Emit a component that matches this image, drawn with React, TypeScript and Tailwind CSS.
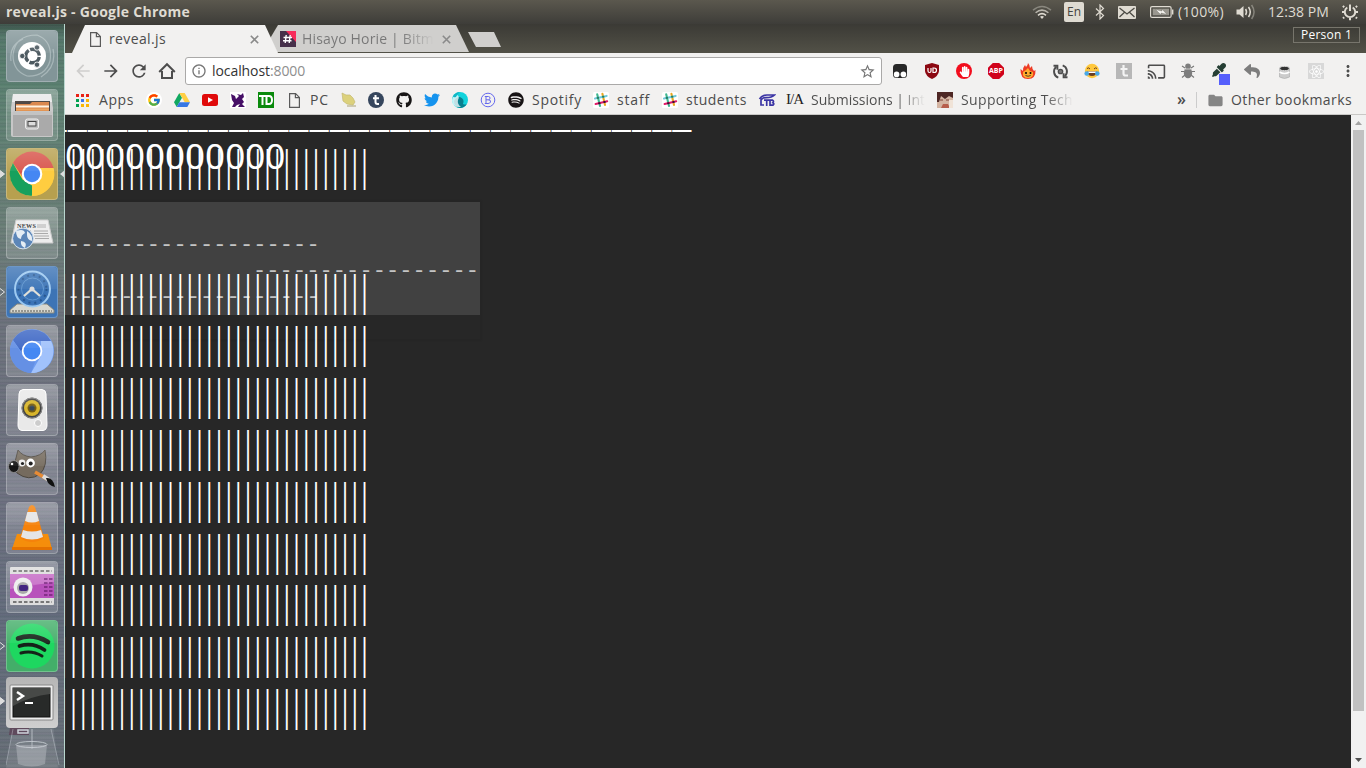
import { useLayoutEffect, useRef, type ReactNode } from "react";
import { FaSpotify, FaGithub, FaTwitter, FaReact, FaReply, FaEyeDropper, FaHandPaper } from "react-icons/fa";
import { FcGoogle } from "react-icons/fc";
import { MdCast, MdRefresh, MdArrowBack, MdArrowForward, MdInfoOutline, MdStarBorder, MdMoreVert, MdFolder } from "react-icons/md";

/** Text spread over a fixed width by letter spacing. */
function Fit({ w, text, className = "" }: { w: number; text: string; className?: string }) {
  const ref = useRef<HTMLSpanElement>(null);
  useLayoutEffect(() => {
    const el = ref.current;
    if (!el) return;
    let spacing = 0.01;
    for (let pass = 0; pass < 4; pass++) {
      el.style.letterSpacing = `${spacing}px`;
      spacing += (w - el.getBoundingClientRect().width) / text.length;
    }
    el.style.letterSpacing = `${spacing}px`;
  }, [w, text]);
  return <span ref={ref} className={`inline-block shrink-0 whitespace-pre pb-[2px] ${className}`}>{text}</span>;
}

function PageIcon() {
  return (
    <svg width="11" height="15" viewBox="0 0 11 15" fill="none" stroke="#5a5a5a" strokeWidth="1.2">
      <path d="M.6 .6H6.6L10.4 4.4V14.4H.6Z" /><path d="M6.4 .8V4.6H10.2" />
    </svg>
  );
}

function Close() {
  return <svg width="9" height="9" viewBox="0 0 9 9" stroke="#8a8a8a" strokeWidth="1.6"><path d="M.8 .8L8.2 8.2M8.2 .8L.8 8.2" /></svg>;
}

function Slack() {
  return (
    <svg width="16" height="16" viewBox="0 0 16 16" strokeWidth="2.1" strokeLinecap="round">
      <rect width="16" height="16" rx="1.5" fill="#fff" />
      <path d="M4.2 2.2L7 14" stroke="#3eb890" /><path d="M9.4 1.8L12 13" stroke="#e9a820" />
      <path d="M2 6.6L13.6 3.9" stroke="#70cadb" /><path d="M2.6 12L14.2 9.3" stroke="#e01765" />
      <path d="M4.7 5.9l.4 0M10 4.8l.4 0" stroke="#258060" /><path d="M6.1 11.2l.4 0M11.3 10l.4 0" stroke="#361238" />
    </svg>
  );
}

function TopBar() {
  return (
    <header className="flex h-6 shrink-0 items-center bg-linear-to-b from-[#5b584e] to-[#3e3d39] pl-[6px] text-[#dfdbd2]">
      <Fit w={184} text="reveal.js - Google Chrome" className="text-[14px] font-bold" />
      <svg className="ml-[842px] shrink-0" width="20" height="16" viewBox="0 0 20 16" fill="none" stroke="#dfdbd2" strokeWidth="1.5">
        <path d="M1 6.2Q10 -1 19 6.2" opacity=".4" /><path d="M3.6 8.8Q10 3.4 16.4 8.8" opacity=".75" /><path d="M6 11.3Q10 8 14 11.3" /><path d="M8 12.8Q10 11.2 12 12.8L10 15Z" fill="#dfdbd2" stroke="none" />
      </svg>
      <div className="ml-[12px] flex h-5 w-5 shrink-0 items-center justify-center rounded-[2px] bg-[#dfdbd2] text-[#45443f]"><Fit w={14} text="En" className="pb-0! text-[12px]" /></div>
      <svg className="ml-[11px] shrink-0" width="10" height="16" viewBox="0 0 10 16" fill="none" stroke="#dfdbd2" strokeWidth="1.2"><path d="M1 4.5L8.5 11.5L5 15V1L8.5 4.5L1 11.5" /></svg>
      <svg className="ml-[13px] shrink-0" width="18" height="13" viewBox="0 0 18 13"><rect width="18" height="13" rx="1" fill="#dfdbd2" /><path d="M1.5 2L9 8L16.5 2M1.5 11L6.3 6.6M16.5 11L11.7 6.6" fill="none" stroke="#4a4943" strokeWidth="1.3" /></svg>
      <svg className="ml-[14px] shrink-0" width="24" height="12" viewBox="0 0 24 12" fill="none" stroke="#dfdbd2"><rect x=".6" y=".6" width="20.5" height="10.8" rx="1.5" strokeWidth="1.2" /><rect x="2.7" y="2.7" width="16.3" height="6.6" fill="#9a978f" stroke="none" /><path d="M22.7 3.5V8.5" strokeWidth="1.4" /><path d="M5.5 3.5L12 5V3L17 8.5L11 7V9Z" fill="#f4f2ee" stroke="#66645c" strokeWidth=".4" /></svg>
      <Fit w={46} text="(100%)" className="ml-[4px] text-[14px]" />
      <svg className="ml-[12px] shrink-0" width="20" height="16" viewBox="0 0 20 16" fill="none" stroke="#dfdbd2" strokeWidth="1.5"><path d="M.5 5.5H3.5L7.5 2V14L3.5 10.5H.5Z" fill="#dfdbd2" stroke="none" /><path d="M9.6 5Q11.4 8 9.6 11" /><path d="M12.5 3Q16 8 12.5 13" /><path d="M15.6 1Q20.5 8 15.6 15" opacity=".4" /></svg>
      <Fit w={61} text="12:38 PM" className="ml-[12px] text-[14px]" />
      <svg className="ml-[12px] shrink-0" width="18" height="18" viewBox="0 0 18 18" fill="none" stroke="#dfdbd2"><path d="M6.3 4.5A5.2 5.2 0 1 0 11.7 4.5" strokeWidth="1.9" /><path d="M9 1.5V8" strokeWidth="2" /><path d="M3.2 4.2L1.9 2.9M1 9H3.5M3.2 14.2L2 15.4M9 15V17.3M14.8 14.2L16 15.4M14.5 9H17M14.8 4.2L16.1 2.9" strokeWidth="2" /></svg>
    </header>
  );
}

function Tile({ tint, children }: { tint: string; children: ReactNode }) {
  return (
    <div className={`relative flex h-[52px] w-[52px] shrink-0 items-center justify-center rounded-[4px] border border-white/25 ${tint}`}>
      <svg width="50" height="50" viewBox="0 0 50 50">{children}</svg>
      <div className="pointer-events-none absolute inset-x-0 top-0 h-[22px] rounded-t-[4px] bg-linear-to-b from-white/20 to-white/5" />
    </div>
  );
}

function Arrow({ fill, top }: { fill: string; top: string }) {
  return <svg className={`absolute left-0 ${top}`} width="5" height="8" viewBox="0 0 5 8"><path d="M0 .5L4.5 4L0 7.5" fill={fill} stroke="#e5e5e5" /></svg>;
}

function Launcher() {
  const glass = "bg-white/15";
  return (
    <aside className="relative flex w-[65px] shrink-0 flex-col gap-[7px] overflow-hidden border-r border-[#b9d7cf] bg-[repeating-linear-gradient(180deg,rgba(255,255,255,.07)_0px,rgba(40,50,60,.12)_1px,rgba(160,120,190,.06)_3px,rgba(20,60,50,.1)_4px,rgba(255,255,255,.04)_7px),linear-gradient(180deg,#3c5549_0px,#55786a_12px,#5b8170_60px,#6b7f77_200px,#6d727c_300px,#6e7180_480px,#636c7c_600px,#676e76_744px)] pl-[6px] pt-[6px]">
      <Tile tint="bg-[#829598]">
        <path d="M6 24Q8 4 30 4Q46 10 43 30Q38 46 20 45Q6 40 6 24M4 30Q2 14 16 8M46 18Q50 36 34 46" fill="none" stroke="#b6c4c6" strokeWidth="1.2" opacity=".7" />
        <circle cx="25" cy="25" r="14" fill="#fff" /><circle cx="25.5" cy="25" r="6.8" fill="none" stroke="#4c5960" strokeWidth="3.4" strokeDasharray="12.7 1.5" strokeDashoffset="-1" />
        <g fill="#4c5960" stroke="#fff" strokeWidth=".8"><circle cx="15.3" cy="25" r="2.7" /><circle cx="30" cy="16.5" r="2.7" /><circle cx="30" cy="33.7" r="2.7" /></g>
      </Tile>
      <Tile tint={glass}>
        <path d="M6 4H44L46 18V45Q46 47 44 47H6Q4 47 4 45V18Z" fill="#c7c7c7" /><path d="M6 4H44L45 12H5Z" fill="#e9e9e9" />
        <rect x="8" y="11" width="35" height="10" fill="#3a332f" /><path d="M9 14H23L25 12H42V21H9Z" fill="#d77b39" /><path d="M9 16.5H42" stroke="#fff3df" strokeWidth="2" /><path d="M9 19.5H42" stroke="#e9a15a" strokeWidth="2" />
        <path d="M6 21H45V46H6Z" fill="#aaa" /><path d="M6 21H45V25H6Z" fill="#c3c3c3" /><rect x="18.5" y="29" width="13" height="10" rx="2" fill="#bebebe" stroke="#eee" /><rect x="21" y="31.5" width="8" height="4.5" fill="#ddd" stroke="#444" />
      </Tile>
      <Tile tint="bg-[#b7a04f]">
        <circle cx="25" cy="25" r="22" fill="#ffcd40" /><path d="M5.9 14A22 22 0 0 1 46.5 19H25L17 30Z" fill="#d8544b" /><path d="M5.9 14L15.5 30.5L25 36.5L25 47A22 22 0 0 1 5.9 14Z" fill="#17a05d" /><path d="M34 30L24.5 47A22 22 0 0 0 46.5 19H27Z" fill="#ffcd40" />
        <circle cx="25" cy="25" r="10.3" fill="#fff" /><circle cx="25" cy="25" r="8.2" fill="#4587f3" />
      </Tile>
      <Tile tint={glass}>
        <path d="M9 12H41L46 35H4Z" fill="#ededed" stroke="#c9c9c9" /><text x="10" y="20" fontSize="6.2" fontWeight="bold" fontFamily="Liberation Serif" textLength="19" fill="#333">NEWS</text>
        <path d="M30 16H39V20H30Z" fill="#ccc" /><path d="M11 23H24M10 25.5H24M27 23H41M27 25.5H41M27 28H42M28 30.5H42" stroke="#aaa" />
        <circle cx="16" cy="30.5" r="10.4" fill="#5c86b8" stroke="#d7e3ef" /><path d="M9 23Q17 20 18 25Q14 27 14 31Q9 30 9 23M20 23Q26 27 25 33Q20 32 20 27M14 33Q21 34 18 40Q13 38 14 33" fill="#e5edf4" />
      </Tile>
      <Tile tint="bg-[#3d74b5]">
        <path d="M10 37H40L47 43V46H3V43Z" fill="#d8d8d0" stroke="#85857b" /><path d="M5 44H45" stroke="#55554d" strokeDasharray="2 1" />
        <circle cx="25.5" cy="22" r="17.5" fill="#3a73b6" stroke="#9cc9f1" strokeWidth="2" /><circle cx="25.5" cy="22" r="14" fill="none" stroke="#28578f" strokeWidth="2" strokeDasharray="2 4" /><circle cx="25.5" cy="22" r="11" fill="none" stroke="#5f96cf" />
        <path d="M17 29L25 22L33 29" fill="none" stroke="#e0e0d8" strokeWidth="2.2" /><circle cx="25" cy="22" r="2.5" fill="#ddd" />
      </Tile>
      <Tile tint={glass}>
        <circle cx="25" cy="25" r="22" fill="#6e9cf0" /><path d="M5.9 14A22 22 0 0 1 44 15H25L16 28Z" fill="#3d67c5" /><path d="M44 15A22 22 0 0 1 24 47L34 30V15Z" fill="#a1c2fb" /><path d="M5.9 14L16 30L28 36L24 47A22 22 0 0 1 5.9 14Z" fill="#6590e4" />
        <circle cx="25" cy="25" r="10.3" fill="#fff" /><circle cx="25" cy="25" r="8.5" fill="#4588f3" />
      </Tile>
      <Tile tint={glass}>
        <path d="M12 9Q12 5 16 4.5H35Q39 5 39 9L40 40Q40 45 36 45.5H15Q11 45 11 40Z" fill="#e9e9e9" stroke="#fff" />
        <circle cx="25" cy="23" r="10.5" fill="#444" /><circle cx="25" cy="23" r="8" fill="#d8b52b" /><circle cx="25" cy="23" r="4.5" fill="#765c10" /><circle cx="25" cy="23" r="2.6" fill="#38485a" /><circle cx="25" cy="23" r="10" fill="none" stroke="#999" strokeWidth=".8" /><circle cx="31" cy="38" r="3.5" fill="#ccc" stroke="#fff" />
      </Tile>
      <Tile tint={glass}>
        <path d="M11 6Q15 12 24 13Q34 12 38 6Q41 22 33 30Q22 38 10 29L7 22Z" fill="#756b5e" stroke="#4c463e" />
        <circle cx="15" cy="19" r="3.4" fill="#eee" /><circle cx="23.5" cy="19" r="4.4" fill="#fff" /><circle cx="15.5" cy="19.5" r="1.6" fill="#111" /><circle cx="23.7" cy="19.5" r="2" fill="#111" />
        <ellipse cx="6.8" cy="22.5" rx="5.3" ry="6" fill="#161616" stroke="#888" /><circle cx="5" cy="20" r="1.3" fill="#fff" /><path d="M28 28L40 35" stroke="#e78b35" strokeWidth="3.5" /><path d="M36 32L42 36" stroke="#ddd" strokeWidth="4" /><path d="M39 34Q46 33 48 43Q41 42 39 34Z" fill="#111" />
      </Tile>
      <Tile tint={glass}>
        <path d="M10 31H41L45 46H5Z" fill="#f58e0b" /><path d="M5 44H45V47H5Z" fill="#e47200" /><path d="M22 4Q25 0 28 4L37 35Q25 43 13 35Z" fill="#f5820b" /><path d="M20.3 9H29.7L32 18Q25 21 18 18Z" fill="#e5e5e5" /><path d="M16 27Q25 30 34 27L36 34Q25 39 14 34Z" fill="#e5e5e5" />
      </Tile>
      <Tile tint={glass}>
        <rect x="3" y="5" width="44" height="38" rx="1" fill="#ddd" /><path d="M6 9H45M6 40H45" stroke="#777" strokeWidth="2" strokeDasharray="3.5 2" /><rect x="3" y="12" width="44" height="24" fill="#b851bb" /><path d="M3 12H47V20L3 27Z" fill="#c973c9" />
        <path d="M37 17H46M37 21H46M37 25H46M37 29H46M37 33H46" stroke="#74257a" strokeWidth="1.5" strokeDasharray="3.5 1.5" /><circle cx="16" cy="25" r="9.5" fill="#eee" /><circle cx="16" cy="26" r="6" fill="#aaa" /><rect x="12" y="23" width="9" height="6" rx="2" fill="#432680" />
      </Tile>
      <Tile tint="bg-[#43ae69]">
        <circle cx="25" cy="25" r="22.5" fill="#1ed760" /><path d="M11 17.5Q26 12 41 21" fill="none" stroke="#152219" strokeWidth="4.6" strokeLinecap="round" /><path d="M12.5 25Q26 21 37.5 29" fill="none" stroke="#152219" strokeWidth="3.8" strokeLinecap="round" /><path d="M14 32Q25 29 35 35" fill="none" stroke="#152219" strokeWidth="3.1" strokeLinecap="round" />
      </Tile>
      <div className="relative z-10 mt-[-2px] flex h-[51px] w-[52px] shrink-0 items-center justify-center rounded-[4px] bg-linear-to-b from-[#b6b6b6] to-[#cfcfcf]">
        <svg width="46" height="38" viewBox="0 0 46 38"><rect x="1" y="1" width="43" height="35" rx="1" fill="#eee" stroke="#888" /><rect x="4" y="4" width="37" height="29" fill="#282a29" stroke="#111" /><path d="M4 4H41V10Q22 12 4 22Z" fill="#474947" /><path d="M8 8L14 12L8 16" fill="none" stroke="#fff" strokeWidth="2.4" /><path d="M16 19H24" stroke="#fff" strokeWidth="2" /></svg>
      </div>
      <svg className="mt-[-10px] shrink-0" width="54" height="44" viewBox="0 0 54 44" fill="none" stroke="#d0d5db">
        <path d="M7 3L0 43H52L47 3Z" fill="#fff" opacity=".1" /><path d="M4 3H23V10H3Z" fill="#5f4a5c" stroke="none" /><path d="M12 5H22V8H12Z" strokeWidth="1.5" /><path d="M26 4V24" opacity=".7" /><path d="M10 20L12 39Q26 44 39 39L41 20Z" fill="#b5b9c0" stroke="none" opacity=".5" /><ellipse cx="25.5" cy="19.5" rx="15.5" ry="3" opacity=".8" /><path d="M7 4L0 40M45 4L53 40" opacity=".4" />
      </svg>
      <Arrow top="top-[146px]" fill="#ddd" /><Arrow top="top-[264px]" fill="none" /><Arrow top="top-[618px]" fill="none" /><Arrow top="top-[673px]" fill="#ddd" />
      <svg className="absolute left-[60px] top-[146px]" width="5" height="8" viewBox="0 0 5 8"><path d="M5 0V8L0 4Z" fill="#ddd" /></svg>
    </aside>
  );
}

function Tabs() {
  return (
    <div className="relative flex h-[29px] shrink-0 items-start bg-linear-to-b from-[#3b3a35] to-[#525147] text-[14px] text-[#4c4c4c]">
      <div className="z-10 mt-[1px] h-7 w-[213px] shrink-0 bg-[#f2f1f0] pl-[25px] [clip-path:polygon(7px_100%,20px_0,200px_0,100%_100%)]">
        <div className="flex h-7 items-center"><PageIcon /><Fit w={57} text="reveal.js" className="ml-[8px]" /><div className="ml-[84px]"><Close /></div></div>
      </div>
      <div className="ml-[-9px] mt-[1px] h-[27px] w-[200px] shrink-0 bg-[#d0cfcd] pl-[11px] [clip-path:polygon(8px_100%,1px_50%,9px_0,187px_0,100%_100%)]">
        <div className="flex h-7 items-center">
          <svg className="shrink-0" width="16" height="16" viewBox="0 0 16 16"><path d="M0 0H16V16H0Z" fill="#46304a" /><path d="M6 0H16V11Z" fill="#f72c5b" /><path d="M6.2 4L5.2 12M10.2 4L9.2 12M3.5 6.5H12M3 9.7H11.5" stroke="#fff" strokeWidth="1.4" /></svg>
          <Fit w={132} text="Hisayo Horie | Bitm" className="ml-[6px] bg-linear-to-r from-[#777] from-75% to-[#d0cfcd] bg-clip-text text-transparent" />
          <div className="ml-[8px]"><Close /></div>
        </div>
      </div>
      <div className="ml-[-1px] mt-[8px] h-[15px] w-[33px] bg-[#d0cfcd] [clip-path:polygon(0_0,26px_0,100%_100%,8px_100%)]" />
      <div className="absolute right-[6px] top-[3px] flex h-4 w-[67px] items-center justify-center border border-[#77756c] text-white"><Fit w={51} text="Person 1" className="pb-0! text-[12px] leading-4" /></div>
    </div>
  );
}

function Slot({ children }: { children: ReactNode }) {
  return <div className="flex w-8 shrink-0 items-center justify-center">{children}</div>;
}

function Toolbar() {
  return (
    <div className="flex h-[33px] shrink-0 items-center bg-[#f2f1f0] pl-[8px] pt-[3px] text-[#4d4d4d]">
      <MdArrowBack className="mr-[8px] shrink-0 text-[#cfcecd]" size={20} /><MdArrowForward className="mr-[8px] shrink-0" size={20} /><MdRefresh className="mr-[9px] shrink-0" size={20} />
      <svg className="shrink-0" width="18" height="18" viewBox="0 0 18 18" fill="none" stroke="#4d4d4d" strokeWidth="2"><path d="M1.2 10L9 2.2L16.8 10M4 9V16H14V9" /></svg>
      <div className="ml-[9px] flex h-7 w-[697px] shrink-0 items-center rounded-[3px] border border-[#aaa9a8] bg-white pl-[5px] text-[14px]">
        <MdInfoOutline size={16} color="#777" /><Fit w={58} text="localhost" className="ml-[5px] text-[#333]" /><Fit w={35} text=":8000" className="text-[#8e8e8e]" />
        <MdStarBorder className="ml-auto mr-[5px]" size={17} color="#757575" />
      </div>
      <div className="ml-[2px] flex items-center">
        <Slot><svg width="16" height="16" viewBox="0 0 16 16"><rect x="1" y="1" width="14" height="14" rx="3.5" fill="#282828" /><circle cx="4.6" cy="11.4" r="2.8" fill="#fff" /><circle cx="11.4" cy="11.4" r="2.8" fill="#fff" /></svg></Slot>
        <Slot><svg width="16" height="16" viewBox="0 0 16 16"><path d="M8 0L15 2V8Q14.5 13 8 16Q1.5 13 1 8V2Z" fill="#8c0812" /><path d="M4 5V8Q4 9.5 5.5 9.5Q7 9.5 7 8V5M9 5V9.5H10Q12.5 9.5 12.5 7.2Q12.5 5 10 5Z" fill="none" stroke="#fff" strokeWidth="1.2" /></svg></Slot>
        <Slot><div className="flex h-4 w-4 items-center justify-center rounded-full bg-[#f20d1d]"><FaHandPaper size={11} color="white" /></div></Slot>
        <Slot><div className="flex h-4 w-4 items-center justify-center bg-[#d0021b] text-white [clip-path:polygon(30%_0,70%_0,100%_30%,100%_70%,70%_100%,30%_100%,0_70%,0_30%)]"><Fit w={14} text="ABP" className="pb-0! text-[7px] leading-[10px] font-bold" /></div></Slot>
        <Slot><svg width="16" height="17" viewBox="0 0 16 17"><path d="M8 0Q10 2 10 5L12 3Q12 6 14 8L15.5 7Q16 16 8 16Q0 16 .5 6L3 8Q3 4 5 2L6 4Q8 2 8 0Z" fill="#ee3b24" /><path d="M3 9L6 7L8 5L10 8L13 9Q14 15 8 15Q2 15 3 9" fill="#ffab2e" /><circle cx="6" cy="10" r="1" /><circle cx="10.5" cy="10" r="1" /><path d="M5.5 12.5Q8 14 10.7 12.5" stroke="#542" fill="none" /></svg></Slot>
        <Slot><svg width="17" height="17" viewBox="0 0 17 17" fill="none" stroke="#4d4d4d" strokeWidth="1.9"><path d="M6.3 14.6A6.4 6.4 0 0 1 4.3 3.7M10.7 2.4A6.4 6.4 0 0 1 12.7 13.3" /><path d="M1.5 2.8H5.4V6.7M15.5 14.2H11.6V10.3" /><circle cx="8.5" cy="8.5" r="2.2" fill="#777" strokeWidth="1.3" /></svg></Slot>
        <Slot><svg width="16" height="16" viewBox="0 0 16 16"><circle cx="8" cy="8" r="7.2" fill="#ffc83d" /><path d="M3.2 8.3H12.8Q12.5 13 8 13Q3.5 13 3.2 8.3" fill="#6b3e20" /><path d="M3.6 8.5H12.4V10H3.6Z" fill="#fff" /><path d="M3 5.5Q4.7 4 6 6M10 6Q11.5 4 13 5.5" stroke="#6b3e20" fill="none" /><circle cx="2.7" cy="10.5" r="2.3" fill="#49a9e9" /><circle cx="13.3" cy="10.5" r="2.3" fill="#49a9e9" /></svg></Slot>
        <Slot><div className="flex h-4 w-4 items-center justify-center bg-[#b7b7b7]"><svg width="9" height="12" viewBox="0 0 9 12" fill="none" stroke="#f4f4f4" strokeWidth="2.2"><path d="M3.5 0V8.5Q3.5 10.5 5.5 10.5H8M.5 4H7.5" /></svg></div></Slot>
        <Slot><MdCast size={19} /></Slot>
        <Slot><svg width="16" height="16" viewBox="0 0 16 16" stroke="#777" strokeWidth="1.1"><path d="M5 5L2 3M11 5L14 3M4.5 8.5H1M11.5 8.5H15M5 12L2 14.5M11 12L14 14.5" /><ellipse cx="8" cy="10" rx="4.2" ry="5.2" fill="#7d7d7d" stroke="none" /><circle cx="8" cy="3.4" r="2.8" fill="#7d7d7d" stroke="none" /><path d="M4.8 6H11.2" stroke="#ddd" strokeWidth=".8" /></svg></Slot>
        <Slot><div className="relative h-4 w-4"><FaEyeDropper size={14} color="#263f34" /><div className="absolute left-[7px] top-[11px] h-[11px] w-[11px] bg-[#555ffc]" /></div></Slot>
        <Slot><FaReply size={16} color="#7d7d7d" /></Slot>
        <Slot><svg className="mt-[2px]" width="11" height="13" viewBox="0 0 11 13"><path d="M.5 2V11Q5.5 14 10.5 11V2Z" fill="#ccc" stroke="#aaa" strokeWidth=".6" /><ellipse cx="5.5" cy="2.5" rx="4.8" ry="2.2" fill="#333" stroke="#ddd" /><path d="M.5 6Q5.5 9 10.5 6" stroke="#fff" strokeWidth="1.5" fill="none" /></svg></Slot>
        <Slot><div className="flex h-4 w-4 items-center justify-center bg-[#d8d8d8]"><FaReact size={15} color="#fff" /></div></Slot>
        <Slot><MdMoreVert size={18} /></Slot>
      </div>
    </div>
  );
}

const fade = "bg-linear-to-r from-[#4c4c4c] from-75% to-[#f2f1f0] bg-clip-text text-transparent";

function Bookmarks() {
  return (
    <div className="flex h-[29px] shrink-0 items-center border-b border-[#c9c8c6] bg-[#f2f1f0] pl-[11px] text-[14px] text-[#4c4c4c]">
      <svg className="shrink-0" width="13" height="13" viewBox="0 0 13 13"><path d="M0 1.5H3M5 1.5H8M10 1.5H13" stroke="#e92216" strokeWidth="3" /><path d="M0 6.5H3M0 11.5H3" stroke="#00a050" strokeWidth="3" /><path d="M5 6.5H8" stroke="#3b78f0" strokeWidth="3" /><path d="M10 6.5H13M5 11.5H8M10 11.5H13" stroke="#fab604" strokeWidth="3" /></svg>
      <Fit w={35} text="Apps" className="ml-[10px]" />
      <div className="ml-[12px] flex h-4 w-4 shrink-0 items-center justify-center rounded-full bg-white"><FcGoogle size={14} /></div>
      <svg className="ml-[12px] shrink-0" width="16" height="14" viewBox="0 0 16 14"><path d="M5.3 0L8 4.7L2.7 14L0 9.3Z" fill="#11a861" /><path d="M5.3 0H10.7L16 9.3H10.7Z" fill="#ffcf43" /><path d="M5.3 9.3H16L13.3 14H2.7Z" fill="#3777e3" /></svg>
      <svg className="ml-[12px] shrink-0" width="16" height="12" viewBox="0 0 16 12"><rect width="16" height="12" rx="2.5" fill="#e00a0a" /><path d="M6 3.2L11 6L6 8.8Z" fill="#fff" /></svg>
      <svg className="ml-[12px] shrink-0" width="16" height="16" viewBox="0 0 16 16"><path d="M0 0H16V16H0Z" fill="#fff" /><path d="M1 2L5 4L6 7L9 4L7 2L11 3L13 1L14 5L12 7L14 10L12 12L15 15H8L10 12L7 13L5 15H2L4 11L2 8Z" fill="#471067" /></svg>
      <div className="ml-[12px] flex h-4 w-4 shrink-0 items-center justify-center bg-[#0a8a0c] text-white"><svg width="14" height="10" viewBox="0 0 14 10" fill="none" stroke="#fff" strokeWidth="2"><path d="M0 1H9M3.5 1V10M7.5 1V9H10Q13 9 13 5Q13 1 10 1H7" /></svg></div>
      <div className="ml-[15px] shrink-0"><PageIcon /></div>
      <Fit w={19} text="PC" className="ml-[10px]" />
      <svg className="ml-[12px] shrink-0" width="16" height="16" viewBox="0 0 16 16"><path d="M1 1L5 3L9 3L12 6L14 10L12 13L6 12L2 9Z" fill="#dcd17c" stroke="#c4b970" strokeWidth=".7" /><path d="M6 14H15" stroke="#a9a272" fill="none" /></svg>
      <div className="ml-[11px] flex h-4 w-4 shrink-0 items-center justify-center rounded-full bg-[#36465d]"><svg width="7" height="10" viewBox="0 0 7 10" fill="none" stroke="#fff" strokeWidth="2"><path d="M2.5 0V7Q2.5 9 4.5 9H6M0 3.3H6" /></svg></div>
      <FaGithub className="ml-[12px] shrink-0" size={16} color="#171515" />
      <FaTwitter className="ml-[12px] shrink-0" size={16} color="#1593ee" />
      <svg className="ml-[12px] shrink-0" width="16" height="16" viewBox="0 0 16 16"><circle cx="8" cy="8" r="8" fill="#12d3dc" /><path d="M8 5Q13 7 11 12Q13 13 15 12Q12 16 8 16Q2 15 2 9Q4 5 8 5Z" fill="#08808f" /><path d="M0 8Q1 3 5 3Q8 4 6 8Q5 12 9 15Q0 16 0 8" fill="#fff" opacity=".75" /><path d="M1 4Q4 0 8 0Q5 2 4 5Q1 6 1 4" fill="#12b5c4" /></svg>
      <svg className="ml-[12px] shrink-0" width="16" height="16" viewBox="0 0 16 16" fill="none" stroke="#6468ed"><circle cx="8" cy="8" r="6.8" /><path d="M6 4.5H8.5Q10.3 4.7 10 6.3Q10 7.5 8.5 7.8Q11 8 10.5 10Q10 11.5 8 11.5H6ZM6 7.8H8.5M4.8 4.5H6M4.8 11.5H6" /></svg>
      <FaSpotify className="ml-[12px] shrink-0" size={16} color="#171314" />
      <Fit w={50} text="Spotify" className="ml-[8px]" />
      <div className="ml-[11px] shrink-0"><Slack /></div><Fit w={33} text="staff" className="ml-[8px]" />
      <div className="ml-[12px] shrink-0"><Slack /></div><Fit w={61} text="students" className="ml-[8px]" />
      <svg className="ml-[11px] shrink-0" width="18" height="14" viewBox="0 0 18 14" fill="none" stroke="#3b35a4" strokeWidth="1.7"><path d="M1.5 6Q4 2 9 2H16.5Q14 4.6 8 4.6Q4 4.6 3 7V12H6M6 7.2H11.5M8.7 7.2V13M12 7.2H14.6Q16.3 8 14.8 9.7Q16.8 10.5 15 12.2H12Z" /></svg>
      <Fit w={17} text="I/A" className="ml-[10px] font-['Liberation_Serif',serif] text-[15px] text-[#222]" />
      <Fit w={114} text="Submissions | Int" className={`ml-[8px] ${fade}`} />
      <svg className="ml-[12px] shrink-0" width="16" height="16" viewBox="0 0 16 16"><path d="M0 0H16V16H0Z" fill="#d4b4a2" /><path d="M0 0H16V6L12 4L8 7L4 4L2 10H0Z" fill="#4e2724" /><path d="M3 8H6M9 8H12" stroke="#7c4034" /><path d="M6 12H11L13 16H4Z" fill="#b75e4c" /><path d="M12 8H16V16H12Z" fill="#f0e3d7" /></svg>
      <Fit w={112} text="Supporting Tech" className={`ml-[8px] ${fade}`} />
      <Fit w={10} text="»" className="ml-[104px] text-[16px] font-semibold" />
      <div className="ml-[9px] h-4 w-px shrink-0 bg-[#ccc]" />
      <MdFolder className="ml-[10px] shrink-0" size={17} color="#858585" />
      <Fit w={121} text="Other bookmarks" className="ml-[7px]" />
    </div>
  );
}

const barRows = ["top-[24px]", "top-[149px]", "top-[201px]", "top-[253px]", "top-[305px]", "top-[357px]", "top-[409px]", "top-[460px]", "top-[512px]", "top-[564px]"];

function Bars({ top }: { top: string }) {
  return <Fit w={310.4} text={"|".repeat(32)} className={`absolute left-[-12px] h-[52px] text-[40px] leading-[52px] font-light text-white ${top}`} />;
}

function Slide() {
  return (
    <main className="relative min-w-0 flex-1 overflow-hidden bg-[#272727]">
      <div className="absolute left-[-4px] top-[86px] h-[139px] w-[420px] border border-[#252525] shadow-[0_0_2px_rgba(0,0,0,.15)]">
        <div className="h-[113px] w-[418px] bg-[#414141] font-['Liberation_Mono',monospace] text-[22px] leading-[26px] text-[#c4c4c4]">
          <Fit w={252.7} text={"-".repeat(19)} className="absolute left-[5px] top-[31px]" />
          <Fit w={226.1} text={"-".repeat(17)} className="absolute left-[191px] top-[57px]" />
          <Fit w={252.7} text={"-".repeat(19)} className="absolute left-[5px] top-[83px]" />
        </div>
      </div>
      <Fit w={645} text={"_".repeat(32)} className="absolute left-[-17px] top-[-21px] font-['Liberation_Sans',sans-serif] text-[33px] leading-[40px] text-white" />
      <Fit w={220.2} text={"0".repeat(11)} className="absolute left-0 top-[15px] font-['Noto_Sans',sans-serif] text-[35px] leading-[52px] text-white" />
      {barRows.map((top) => <Bars key={top} top={top} />)}
    </main>
  );
}

function Scrollbar() {
  return (
    <div className="flex w-[15px] shrink-0 flex-col items-center bg-[#f1f1f1] pt-[6px]">
      <svg width="7" height="4"><path d="M0 4L3.5 0L7 4Z" fill="#a3a3a3" /></svg>
      <div className="mt-[5px] h-[581px] w-[11px] bg-[#c1c1c1]" />
      <svg className="mt-auto mb-[6px]" width="7" height="4"><path d="M0 0L3.5 4L7 0Z" fill="#505050" /></svg>
    </div>
  );
}

export default function App() {
  return (
    <div className="flex h-[768px] w-[1366px] flex-col overflow-hidden font-['Open_Sans','Noto_Sans',sans-serif]">
      <TopBar />
      <div className="flex min-h-0 flex-1">
        <Launcher />
        <div className="flex min-w-0 flex-1 flex-col">
          <Tabs />
          <Toolbar />
          <Bookmarks />
          <div className="flex min-h-0 flex-1"><Slide /><Scrollbar /></div>
        </div>
      </div>
    </div>
  );
}
